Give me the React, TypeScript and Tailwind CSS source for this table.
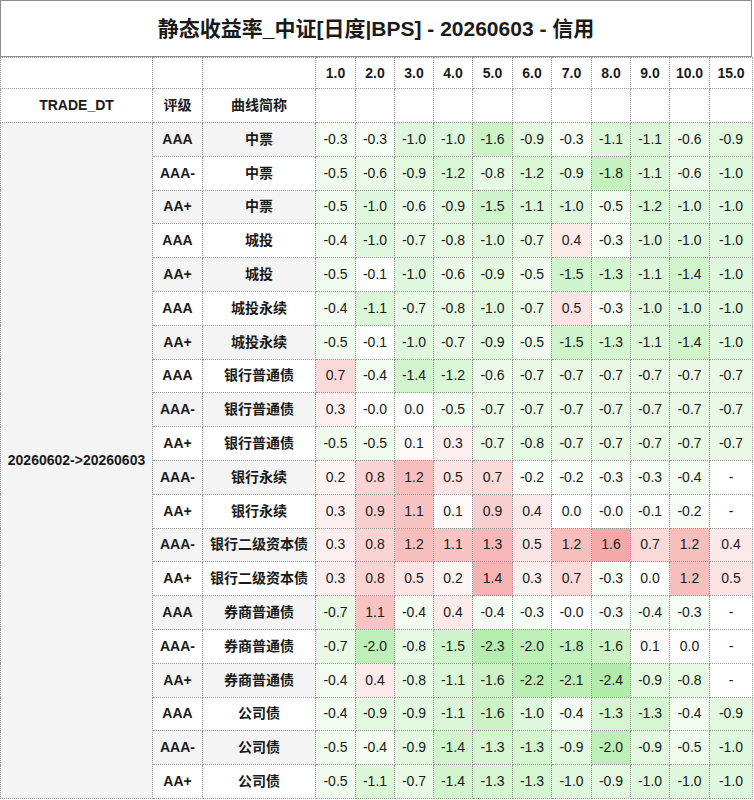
const tenors = ['1.0', '2.0', '3.0', '4.0', '5.0', '6.0', '7.0', '8.0', '9.0', '10.0', '15.0'];
const colWidths = [40, 39, 39, 39, 40, 39, 40, 39, 39, 40, 43];

type Row = { rating: string; curve: string; vals: string[] };

const rows: Row[] = [
  { rating: 'AAA', curve: '中票', vals: ['-0.3', '-0.3', '-1.0', '-1.0', '-1.6', '-0.9', '-0.3', '-1.1', '-1.1', '-0.6', '-0.9'] },
  { rating: 'AAA-', curve: '中票', vals: ['-0.5', '-0.6', '-0.9', '-1.2', '-0.8', '-1.2', '-0.9', '-1.8', '-1.1', '-0.6', '-1.0'] },
  { rating: 'AA+', curve: '中票', vals: ['-0.5', '-1.0', '-0.6', '-0.9', '-1.5', '-1.1', '-1.0', '-0.5', '-1.2', '-1.0', '-1.0'] },
  { rating: 'AAA', curve: '城投', vals: ['-0.4', '-1.0', '-0.7', '-0.8', '-1.0', '-0.7', '0.4', '-0.3', '-1.0', '-1.0', '-1.0'] },
  { rating: 'AA+', curve: '城投', vals: ['-0.5', '-0.1', '-1.0', '-0.6', '-0.9', '-0.5', '-1.5', '-1.3', '-1.1', '-1.4', '-1.0'] },
  { rating: 'AAA', curve: '城投永续', vals: ['-0.4', '-1.1', '-0.7', '-0.8', '-1.0', '-0.7', '0.5', '-0.3', '-1.0', '-1.0', '-1.0'] },
  { rating: 'AA+', curve: '城投永续', vals: ['-0.5', '-0.1', '-1.0', '-0.7', '-0.9', '-0.5', '-1.5', '-1.3', '-1.1', '-1.4', '-1.0'] },
  { rating: 'AAA', curve: '银行普通债', vals: ['0.7', '-0.4', '-1.4', '-1.2', '-0.6', '-0.7', '-0.7', '-0.7', '-0.7', '-0.7', '-0.7'] },
  { rating: 'AAA-', curve: '银行普通债', vals: ['0.3', '-0.0', '0.0', '-0.5', '-0.7', '-0.7', '-0.7', '-0.7', '-0.7', '-0.7', '-0.7'] },
  { rating: 'AA+', curve: '银行普通债', vals: ['-0.5', '-0.5', '0.1', '0.3', '-0.7', '-0.8', '-0.7', '-0.7', '-0.7', '-0.7', '-0.7'] },
  { rating: 'AAA-', curve: '银行永续', vals: ['0.2', '0.8', '1.2', '0.5', '0.7', '-0.2', '-0.2', '-0.3', '-0.3', '-0.4', '-'] },
  { rating: 'AA+', curve: '银行永续', vals: ['0.3', '0.9', '1.1', '0.1', '0.9', '0.4', '0.0', '-0.0', '-0.1', '-0.2', '-'] },
  { rating: 'AAA-', curve: '银行二级资本债', vals: ['0.3', '0.8', '1.2', '1.1', '1.3', '0.5', '1.2', '1.6', '0.7', '1.2', '0.4'] },
  { rating: 'AA+', curve: '银行二级资本债', vals: ['0.3', '0.8', '0.5', '0.2', '1.4', '0.3', '0.7', '-0.3', '0.0', '1.2', '0.5'] },
  { rating: 'AAA', curve: '券商普通债', vals: ['-0.7', '1.1', '-0.4', '0.4', '-0.4', '-0.3', '-0.0', '-0.3', '-0.4', '-0.3', '-'] },
  { rating: 'AAA-', curve: '券商普通债', vals: ['-0.7', '-2.0', '-0.8', '-1.5', '-2.3', '-2.0', '-1.8', '-1.6', '0.1', '0.0', '-'] },
  { rating: 'AA+', curve: '券商普通债', vals: ['-0.4', '0.4', '-0.8', '-1.1', '-1.6', '-2.2', '-2.1', '-2.4', '-0.9', '-0.8', '-'] },
  { rating: 'AAA', curve: '公司债', vals: ['-0.4', '-0.9', '-0.9', '-1.1', '-1.6', '-1.0', '-0.4', '-1.3', '-1.3', '-0.4', '-0.9'] },
  { rating: 'AAA-', curve: '公司债', vals: ['-0.5', '-0.4', '-0.9', '-1.4', '-1.3', '-1.3', '-0.9', '-2.0', '-0.9', '-0.5', '-1.0'] },
  { rating: 'AA+', curve: '公司债', vals: ['-0.5', '-1.1', '-0.7', '-1.4', '-1.3', '-1.3', '-1.0', '-0.9', '-1.0', '-1.0', '-1.0'] },
];

// 白 -> 绿 / 白 -> 红
function heat(s: string) {
  const v = parseFloat(s);
  if (isNaN(v) || v === 0) return '#ffffff';
  const mix = (c: number[], t: number) =>
    `rgb(${c.map(x => Math.round(255 - (255 - x) * t)).join(',')})`;
  if (v < 0) return mix([178, 236, 170], Math.min(-v / 2.4, 1));
  return mix([244, 168, 168], Math.min(v / 1.6, 1));
}

const cell = 'border border-dotted border-[#9a9a9a] text-center p-0';

export default function App() {
  return (
    <div className="w-[754px] bg-white text-[#1a1a1a] font-['Liberation_Sans','Noto_Sans_CJK_SC',sans-serif]">
      <div className="w-[752px] h-[57px] border border-[#8c8c8c] flex items-center justify-center">
        <span className="text-[21px] font-bold">静态收益率_中证[日度|BPS] - 20260603 - 信用</span>
      </div>

      <table className="w-[752px] table-fixed border-collapse text-[14px]">
        <colgroup>
          <col className="w-[152px]" />
          <col className="w-[50px]" />
          <col className="w-[113px]" />
          {colWidths.map((w, i) => (
            <col key={i} style={{ width: w }} />
          ))}
        </colgroup>
        <thead>
          <tr className="h-[31px]">
            <th className={cell} />
            <th className={cell} />
            <th className={cell} />
            {tenors.map(t => (
              <th key={t} className={`${cell} font-bold`}>{t}</th>
            ))}
          </tr>
          <tr className="h-[34px]">
            <th className={`${cell} font-bold`}>TRADE_DT</th>
            <th className={`${cell} font-bold`}>评级</th>
            <th className={`${cell} font-bold`}>曲线简称</th>
            {tenors.map(t => (
              <th key={t} className={cell} />
            ))}
          </tr>
        </thead>
        <tbody>
          {rows.map((r, i) => {
            const stripe = i % 2 === 0 ? 'bg-[#f4f4f4]' : 'bg-white';
            return (
              <tr key={i} className="h-[33.8px]">
                {i === 0 && (
                  <td rowSpan={rows.length} className={`${cell} bg-[#f4f4f4] font-bold`}>
                    20260602-&gt;20260603
                  </td>
                )}
                <td className={`${cell} ${stripe} font-bold`}>{r.rating}</td>
                <td className={`${cell} ${stripe} font-bold`}>{r.curve}</td>
                {r.vals.map((v, j) => (
                  <td key={j} className={cell} style={{ backgroundColor: heat(v) }}>
                    {v}
                  </td>
                ))}
              </tr>
            );
          })}
        </tbody>
      </table>
    </div>
  );
}
